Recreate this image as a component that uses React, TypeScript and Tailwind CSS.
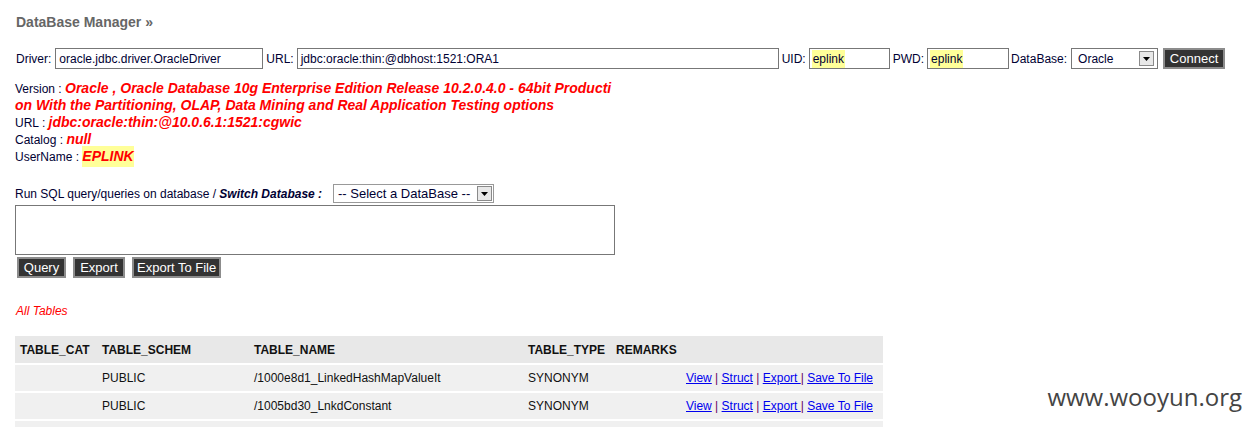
import React from "react";

const font = { fontFamily: '"Liberation Sans", Arial, sans-serif' };

function Arrow() {
  // old windows-style dropdown button
  return (
    <span className="flex h-[15px] w-[15px] items-center justify-center border border-[#8a8a8a] bg-[#e8e8e8]">
      <svg width="7" height="4" viewBox="0 0 7 4">
        <path d="M0 0h7L3.5 4z" fill="#000" />
      </svg>
    </span>
  );
}

function DarkButton({ label, className = "" }: { label: string; className?: string }) {
  return (
    <button className={`h-[21px] whitespace-nowrap border-2 border-[#8c8c8c] bg-[#333] px-[3px] text-[13px] leading-none text-white ${className}`}>
      {label}
    </button>
  );
}

const rows = [
  { schem: "PUBLIC", name: "/1000e8d1_LinkedHashMapValueIt", type: "SYNONYM" },
  { schem: "PUBLIC", name: "/1005bd30_LnkdConstant", type: "SYNONYM" },
];

const red = "text-[14px] font-bold italic text-[#ff0000]";

export default function App() {
  return (
    <div className="relative h-[427px] w-[1252px] overflow-hidden bg-white text-[12px] text-[#000033]" style={font}>
      <div className="pl-[16px] pt-[14px]">
        <h1 className="text-[14px] font-bold leading-[16px] text-[#666]">DataBase Manager »</h1>
      </div>

      {/* connection row */}
      <div className="mt-[18px] flex items-center pl-[16px]">
        <span>Driver:</span>
        <div className="ml-[4px] flex h-[21px] w-[208px] items-center border border-[#777] px-[3px]">oracle.jdbc.driver.OracleDriver</div>
        <span className="ml-[3px]">URL:</span>
        <div className="ml-[3px] flex h-[21px] w-[482px] items-center border border-[#777] px-[3px]">jdbc:oracle:thin:@dbhost:1521:ORA1</div>
        <span className="ml-[3px]">UID:</span>
        <div className="ml-[3px] flex h-[21px] w-[81px] items-center border border-[#777] px-[2px]">
          <span className="bg-[#ffff99] px-px">eplink</span>
        </div>
        <span className="ml-[3px]">PWD:</span>
        <div className="ml-[3px] flex h-[21px] w-[82px] items-center border border-[#777] px-[2px]">
          <span className="bg-[#ffff99] px-px">eplink</span>
        </div>
        <span className="ml-[2px]">DataBase:</span>
        <div className="ml-[4px] flex h-[21px] w-[87px] items-center justify-between border border-[#777] pl-[6px] pr-[3px]">
          <span>Oracle</span>
          <Arrow />
        </div>
        <DarkButton label="Connect" className="ml-[5px] w-[62px]" />
      </div>

      {/* info */}
      <div className="mt-[11px] pl-[15px]">
        <div className="flex h-[17px] items-center whitespace-nowrap">
          Version :&nbsp;<b className={red}>Oracle , Oracle Database 10g Enterprise Edition Release 10.2.0.4.0 - 64bit Producti</b>
        </div>
        <div className="flex h-[17px] items-center whitespace-nowrap">
          <b className={red}>on With the Partitioning, OLAP, Data Mining and Real Application Testing options</b>
        </div>
        <div className="flex h-[17px] items-center">
          URL :&nbsp;<b className={red}>jdbc:oracle:thin:@10.0.6.1:1521:cgwic</b>
        </div>
        <div className="flex h-[17px] items-center">
          Catalog :&nbsp;<b className={red}>null</b>
        </div>
        <div className="flex h-[17px] items-center">
          UserName :&nbsp;<b className={`bg-[#ffff99] ${red}`}>EPLINK</b>
        </div>
      </div>

      {/* query */}
      <div className="mt-[19px] pl-[15px]">
        <div className="flex h-[19px] items-center">
          <span className="w-[318px] whitespace-nowrap">
            Run SQL query/queries on database / <b className="italic">Switch Database :</b>
          </span>
          <div className="flex h-[19px] w-[161px] items-center justify-between border border-[#999] pl-[4px] pr-[1px] text-[13px]">
            <span>-- Select a DataBase --</span>
            <Arrow />
          </div>
        </div>
        <div className="mt-[2px] h-[50px] w-[600px] border border-[#777]" />
        <div className="mt-[2px] flex gap-[7px] pl-[2px]">
          <DarkButton label="Query" className="w-[49px]" />
          <DarkButton label="Export" className="w-[52px]" />
          <DarkButton label="Export To File" className="w-[89px]" />
        </div>
      </div>

      <div className="mt-[24px] flex h-[17px] items-center pl-[16px] italic text-[#ff0000]">All Tables</div>

      {/* tables */}
      <div className="mt-[17px] ml-[15px] w-[868px]">
        <div className="flex h-[27px] items-center bg-[#e8e8e8] font-bold text-[#111]">
          <span className="w-[87px] pl-[5px]">TABLE_CAT</span>
          <span className="w-[152px]">TABLE_SCHEM</span>
          <span className="w-[274px]">TABLE_NAME</span>
          <span className="w-[88px]">TABLE_TYPE</span>
          <span>REMARKS</span>
        </div>
        {rows.map((r) => (
          <div key={r.name} className="flex h-[28px] items-center border-t-2 border-white bg-[#f0f0f0] text-[#111]">
            <span className="w-[87px]" />
            <span className="w-[152px]">{r.schem}</span>
            <span className="w-[274px]">{r.name}</span>
            <span className="w-[88px]">{r.type}</span>
            <span className="ml-auto pr-[10px] text-[#660066]">
              <a className="text-[#0000ee] underline">View</a> | <a className="text-[#0000ee] underline">Struct</a> |{" "}
              <a className="text-[#0000ee] underline">Export </a>| <a className="text-[#0000ee] underline">Save To File</a>
            </span>
          </div>
        ))}
        <div className="h-[10px] border-t-2 border-white bg-[#f0f0f0]" />
      </div>

      <div className="absolute right-[10px] top-[379px] text-[24px] text-[#444]" style={{ fontFamily: '"Open Sans", sans-serif' }}>
        www.wooyun.org
      </div>
    </div>
  );
}
